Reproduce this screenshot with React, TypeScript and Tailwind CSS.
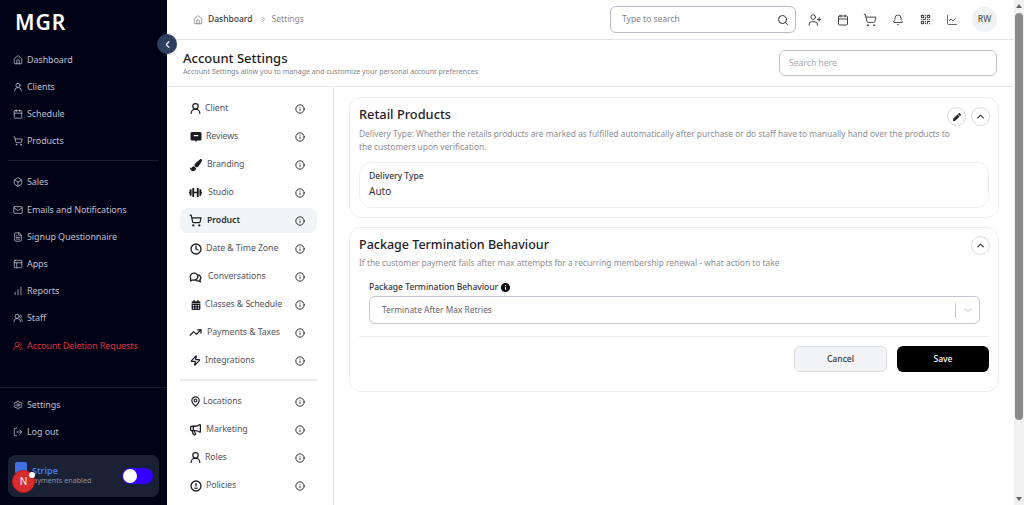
import React from "react";
import {
  Box,
  Calendar,
  ChartLine,
  ChartNoAxesColumnIncreasing,
  ChevronDown,
  ChevronLeft,
  ChevronRight,
  ChevronUp,
  Clock,
  FileText,
  House,
  Info,
  LogOut,
  Mail,
  MapPin,
  Megaphone,
  PanelsTopLeft,
  QrCode,
  Search,
  Settings,
  ShoppingCart,
  TrendingUp,
  UserPlus,
  UserRound,
  UsersRound,
  Bell,
  Zap,
} from "lucide-react";
import { FaCalendarAlt, FaDumbbell, FaPaintBrush, FaPen } from "react-icons/fa";
import { MdInfo } from "react-icons/md";

const topLinks = [
  { label: "Dashboard", icon: House, mt: "mt-0" },
  { label: "Clients", icon: UserRound, mt: "mt-[9px]" },
  { label: "Schedule", icon: Calendar, mt: "mt-[9px]" },
  { label: "Products", icon: ShoppingCart, mt: "mt-[9px]" },
];

const midLinks = [
  { label: "Sales", icon: Box, mt: "mt-0" },
  { label: "Emails and Notifications", icon: Mail, mt: "mt-[10px]" },
  { label: "Signup Questionnaire", icon: FileText, mt: "mt-[9px]" },
  { label: "Apps", icon: PanelsTopLeft, mt: "mt-[9px]" },
  { label: "Reports", icon: ChartNoAxesColumnIncreasing, mt: "mt-[9px]" },
  { label: "Staff", icon: UsersRound, mt: "mt-[9px]" },
];

const ChatCircles = () => (
  <svg width="13" height="13" viewBox="0 0 24 24" fill="none" stroke="currentColor" strokeWidth="2.4">
    <path d="M3 15a7 6.5 0 1 1 4 3.4L3 20z" />
    <path d="M16 9a6 5.5 0 0 1 4 9.5l1 3-4-1.5a6 6 0 0 1-5-1" />
  </svg>
);

const CardIcon = () => (
  <svg width="12" height="12" viewBox="0 0 24 24" fill="currentColor">
    <path d="M4 2h16a3 3 0 0 1 3 3v11a3 3 0 0 1-3 3h-6l-2 3-2-3H4a3 3 0 0 1-3-3V5a3 3 0 0 1 3-3z" />
    <path d="M7.500 8h9v2.500h-9z" fill="#fff" />
  </svg>
);

const PolicyIcon = () => (
  <svg width="12" height="12" viewBox="0 0 24 24" fill="none" stroke="currentColor" strokeWidth="2.6">
    <circle cx="12" cy="12" r="10" />
    <path d="M12 6v7" />
    <path d="M9 16.500h6" />
  </svg>
);

const settingsTop = [
  { label: "Client", icon: <UserRound size={13} strokeWidth={2.2} />, gap: "ml-[3px]" },
  { label: "Reviews", icon: <CardIcon />, gap: "ml-[4px]" },
  { label: "Branding", icon: <FaPaintBrush size={12} />, gap: "ml-[5px]" },
  { label: "Studio", icon: <FaDumbbell size={13} />, gap: "ml-[6px]" },
  { label: "Product", icon: <ShoppingCart size={13} strokeWidth={2.2} />, gap: "ml-[5px]", active: true },
  { label: "Date & Time Zone", icon: <Clock size={12} strokeWidth={2.6} />, gap: "ml-[4px]" },
  { label: "Conversations", icon: <ChatCircles />, gap: "ml-[6px]" },
  { label: "Classes & Schedule", icon: <FaCalendarAlt size={10} className="mx-px" />, gap: "ml-[3px]" },
  { label: "Payments & Taxes", icon: <TrendingUp size={13} strokeWidth={2.2} />, gap: "ml-[5px]" },
  { label: "Integrations", icon: <Zap size={11} strokeWidth={2.6} />, gap: "ml-[3px]" },
];

const settingsBottom = [
  { label: "Locations", icon: <MapPin size={11} strokeWidth={2.4} />, gap: "ml-[1px]" },
  { label: "Marketing", icon: <Megaphone size={13} strokeWidth={2.4} />, gap: "ml-[4px]" },
  { label: "Roles", icon: <UserRound size={13} strokeWidth={2.2} />, gap: "ml-[3px]" },
  { label: "Policies", icon: <PolicyIcon />, gap: "ml-[4px]" },
];

function SideLink({ label, icon: Icon, mt }: { label: string; icon: typeof House; mt: string }) {
  return (
    <div className={`flex h-[18px] items-center ${mt}`}>
      <Icon size={10} strokeWidth={1.8} className="text-[#c4c6d0]" />
      <span className="ml-[4px] text-[9px] tracking-[-0.1px] text-[#bcbecb]">{label}</span>
    </div>
  );
}

function SettingsRow({
  label,
  icon,
  gap,
  active,
}: {
  label: string;
  icon: React.ReactNode;
  gap: string;
  active?: boolean;
}) {
  return (
    <div className={`flex h-[25px] items-center rounded-lg pl-[9px] pr-[12px] mb-[3px] ${active ? "bg-[#f2f4f8]" : ""}`}>
      <span className="flex w-[13px] justify-center text-[#1c1c22]">{icon}</span>
      <span className={`${gap} pt-px text-[8.800px] tracking-[-0.1px] ${active ? "font-semibold text-[#2d2d33]" : "text-[#55555c]"}`}>{label}</span>
      <Info size={10} strokeWidth={2.2} className="ml-auto text-[#222]" />
    </div>
  );
}

function RoundButton({ children }: { children: React.ReactNode }) {
  return (
    <button className="flex h-[19px] w-[19px] items-center justify-center rounded-full border border-[#dcdcdc] bg-white text-[#333]">
      {children}
    </button>
  );
}

export default function App() {
  return (
    <div className="flex h-[505px] w-[1024px] overflow-hidden bg-white font-['Noto_Sans',sans-serif]">
      {/* Sidebar */}
      <aside className="relative flex w-[167px] shrink-0 flex-col bg-[#020217]">
        <div className="pl-[15px] pt-[9px] text-[21px] font-semibold leading-[26px] tracking-[1px] text-white">MGR</div>
        <nav className="mt-[16px] pl-[13px]">
          {topLinks.map(l => (
            <SideLink key={l.label} {...l} />
          ))}
        </nav>
        <div className="mx-[8px] mb-[12px] mt-[10px] h-px bg-[#1b1c2e]" />
        <nav className="pl-[13px]">
          {midLinks.map(l => (
            <SideLink key={l.label} {...l} />
          ))}
          <div className="mt-[10px] flex h-[18px] items-center">
            <UsersRound size={10} strokeWidth={1.8} className="text-[#e0303f]" />
            <span className="ml-[4px] text-[9px] tracking-[-0.1px] text-[#d9303f]">Account Deletion Requests</span>
          </div>
        </nav>
        <div className="mt-[32px] h-px bg-[#1b1c2e]" />
        <nav className="mt-[8px] pl-[13px]">
          <SideLink label="Settings" icon={Settings} mt="mt-0" />
          <SideLink label="Log out" icon={LogOut} mt="mt-[9px]" />
        </nav>
        <div className="mx-[8px] mt-[14px] flex h-[42px] items-center rounded-lg bg-[#1b2135] pl-[7px] pr-[6px]">
          <div className="h-[12px] w-[12px] shrink-0 -translate-y-[8px] rounded-[2px] bg-[#3f6fe0]" />
          <div className="ml-[5px] -translate-y-px leading-none">
            <div className="text-[9px] font-semibold text-[#3f7be8]">Stripe</div>
            <div className="-ml-[3px] mt-[2px] text-[7.200px] text-[#8b90a3]">Payments enabled</div>
          </div>
          <div className="ml-auto flex h-[16px] w-[31px] items-center rounded-full bg-[#3300ff] pl-[1px]">
            <div className="h-[14px] w-[14px] rounded-full bg-white" />
          </div>
        </div>
        {/* collapse button */}
        <button className="absolute left-[157px] top-[34px] z-10 flex h-[20px] w-[20px] items-center justify-center rounded-full bg-[#2e3f5f] text-white shadow">
          <ChevronLeft size={11} strokeWidth={2.5} />
        </button>
        {/* floating N badge */}
        <div className="absolute left-[12px] top-[470px] flex h-[23px] w-[23px] items-center justify-center rounded-full border border-[#b91c1c] bg-[#d92d2d] text-[10px] text-white">
          N
          <span className="absolute -right-[1px] top-[1px] h-[6px] w-[6px] rounded-full bg-white" />
        </div>
      </aside>

      {/* Main */}
      <div className="flex min-w-0 flex-1 flex-col">
        <header className="flex h-[40px] shrink-0 items-center border-b border-[#e6e6e8] pl-[26px] pr-[17px]">
          <House size={10} strokeWidth={1.6} className="text-[#666]" />
          <span className="ml-[5px] text-[8.500px] font-medium text-[#3a3a40]">Dashboard</span>
          <ChevronRight size={9} className="ml-[6px] text-[#888]" />
          <span className="ml-[4px] text-[8.500px] text-[#8a8a90]">Settings</span>
          <div className="ml-auto flex h-[27px] w-[186px] items-center rounded-md border border-[#b9bcc6] pl-[11px] pr-[6px]">
            <span className="text-[8.500px] text-[#85858b]">Type to search</span>
            <Search size={12} strokeWidth={2} className="ml-auto text-[#333]" />
          </div>
          <div className="ml-[12px] flex items-center text-[#444]">
            <UserPlus size={14} strokeWidth={1.7} />
            <Calendar size={12} strokeWidth={2} className="ml-[15px]" />
            <ShoppingCart size={14} strokeWidth={1.7} className="ml-[14px]" />
            <Bell size={12} strokeWidth={1.8} className="ml-[15px]" />
            <QrCode size={11} strokeWidth={2.4} className="ml-[16px]" />
            <ChartLine size={12} strokeWidth={1.6} className="ml-[15px]" />
            <div className="ml-[14px] flex h-[25px] w-[25px] items-center justify-center rounded-full bg-[#f1f2f4] text-[8.500px] font-medium text-[#555]">
              RW
            </div>
          </div>
        </header>

        <div className="flex h-[47px] shrink-0 items-center justify-between border-b border-[#e6e6e8] pl-[16px] pr-[17px]">
          <div>
            <div className="text-[13px] font-medium leading-[16px] text-[#1c1c20]">Account Settings</div>
            <div className="text-[7.100px] leading-[11px] text-[#85858b]">
              Account Settings allow you to manage and customize your personal account preferences
            </div>
          </div>
          <div className="flex h-[26px] w-[218px] items-center rounded-md border border-[#c0c3cc] pl-[9px] text-[8.600px] text-[#a9a9ae]">
            Search here
          </div>
        </div>

        <div className="flex min-h-0 flex-1">
          {/* Settings navigation */}
          <div className="w-[167px] shrink-0 border-r border-[#e6e6e8] pl-[13px] pr-[16px] pt-[9px]">
            {settingsTop.map(r => (
              <SettingsRow key={r.label} {...r} />
            ))}
            <div className="mb-[8px] mt-[6px] h-[2px] bg-[#ececee]" />
            {settingsBottom.map(r => (
              <SettingsRow key={r.label} {...r} />
            ))}
          </div>

          {/* Cards */}
          <div className="min-w-0 flex-1 pl-[15px] pr-[15px] pt-[10px]">
            <section className="h-[121px] rounded-xl border border-[#efeff1] px-[9px]">
              <div className="flex items-start justify-between pt-[7px]">
                <h2 className="text-[12.800px] font-medium leading-[18px] text-[#222228]">Retail Products</h2>
                <div className="mr-[-1px] mt-[2px] flex gap-[5px]">
                  <RoundButton>
                    <FaPen size={8} className="text-[#222]" />
                  </RoundButton>
                  <RoundButton>
                    <ChevronUp size={11} strokeWidth={2.4} />
                  </RoundButton>
                </div>
              </div>
              <p className="mt-[1px] w-[600px] text-[8.400px] leading-[13px] text-[#8f8f95]">
                Delivery Type: Whether the retails products are marked as fulfilled automatically after purchase or do staff have to manually hand over the products to the customers upon verification.
              </p>
              <div className="mt-[9px] h-[46px] rounded-xl border border-[#efeff1] px-[9px] pt-[7px]">
                <div className="text-[8.500px] font-medium leading-[12px] text-[#33333a]">Delivery Type</div>
                <div className="mt-[1px] text-[10px] leading-[16px] text-[#33333a]">Auto</div>
              </div>
            </section>

            <section className="mt-[9px] h-[165px] rounded-xl border border-[#efeff1] px-[9px]">
              <div className="flex items-start justify-between pt-[8px]">
                <h2 className="text-[12.500px] font-medium leading-[18px] text-[#222228]">Package Termination Behaviour</h2>
                <div className="mr-[-1px]">
                  <RoundButton>
                    <ChevronUp size={11} strokeWidth={2.4} />
                  </RoundButton>
                </div>
              </div>
              <p className="mt-[1px] text-[8.400px] leading-[13px] text-[#8f8f95]">
                If the customer payment fails after max attempts for a recurring membership renewal - what action to take
              </p>
              <div className="ml-[10px] mt-[12px] flex items-center text-[8.500px] font-medium leading-[12px] text-[#33333a]">
                Package Termination Behaviour
                <MdInfo size={11} className="ml-[2px] text-[#111]" />
              </div>
              <div className="ml-[10px] mr-[9px] mt-[3px] flex h-[28px] items-center rounded-md border border-[#c4c7d0] pl-[12px] pr-[5px]">
                <span className="text-[8.400px] text-[#66666c]">Terminate After Max Retries</span>
                <span className="ml-auto h-[15px] w-px bg-[#c4c7d0]" />
                <ChevronDown size={12} className="ml-[6px] text-[#b5b5bb]" />
              </div>
              <div className="mt-[12px] h-px bg-[#eeeef0]" />
              <div className="mt-[9px] flex justify-end gap-[10px]">
                <button className="h-[26px] w-[93px] rounded-md border border-[#dcdde2] bg-[#f3f4f6] text-[8.600px] font-medium text-[#333]">
                  Cancel
                </button>
                <button className="h-[26px] w-[92px] rounded-md bg-black text-[8.600px] font-medium text-white">
                  Save
                </button>
              </div>
            </section>
          </div>
        </div>
      </div>

      {/* Page scrollbar */}
      <div className="flex w-[10px] shrink-0 flex-col items-center bg-[#f1f1f1]">
        <span className="mt-[4px] h-0 w-0 border-x-[3px] border-b-[4px] border-x-transparent border-b-[#666]" />
        <div className="mt-[5px] h-[407px] w-[8px] rounded-full bg-[#8a8a8a]" />
        <span className="mt-auto mb-[4px] h-0 w-0 border-x-[3px] border-t-[4px] border-x-transparent border-t-[#666]" />
      </div>
    </div>
  );
}
